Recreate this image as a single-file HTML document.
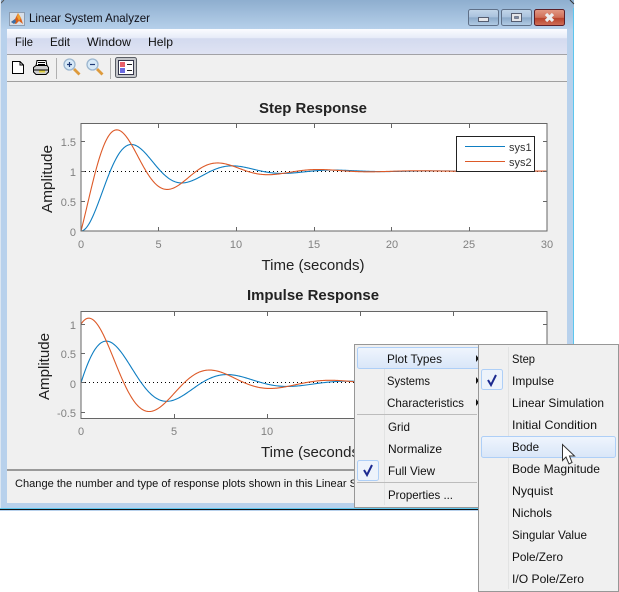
<!DOCTYPE html>
<html><head><meta charset="utf-8"><title>Linear System Analyzer</title>
<style>
html,body{margin:0;padding:0;background:#fff;width:619px;height:592px;overflow:hidden}
svg{display:block;font-family:"Liberation Sans",sans-serif}
.m{font-size:12px;fill:#111}
.t{font-size:11px;fill:#808080}
.e{text-anchor:end}.c{text-anchor:middle}
.l{font-size:15px;fill:#222}
.h{font-size:14.5px;font-weight:bold;fill:#222}
</style></head><body>
<svg xmlns="http://www.w3.org/2000/svg" width="619" height="592" viewBox="0 0 619 592">
<defs>
<linearGradient id="tg" x1="0" y1="0" x2="0" y2="1"><stop offset="0" stop-color="#8eaecf"/><stop offset="1" stop-color="#b6d0ea"/></linearGradient>
<linearGradient id="mg" x1="0" y1="0" x2="0" y2="1"><stop offset="0" stop-color="#fbfcff"/><stop offset=".36" stop-color="#e6ebf8"/><stop offset=".38" stop-color="#d3daef"/><stop offset="1" stop-color="#dfe3f3"/></linearGradient>
<linearGradient id="bg" x1="0" y1="0" x2="0" y2="1"><stop offset="0" stop-color="#c3d6ea"/><stop offset=".48" stop-color="#a9c2dd"/><stop offset=".5" stop-color="#8aa8c8"/><stop offset="1" stop-color="#b3cde6"/></linearGradient>
<linearGradient id="cg" x1="0" y1="0" x2="0" y2="1"><stop offset="0" stop-color="#e39a86"/><stop offset=".5" stop-color="#cf6f58"/><stop offset=".55" stop-color="#b8432c"/><stop offset="1" stop-color="#d0715a"/></linearGradient>
<linearGradient id="hg" x1="0" y1="0" x2="0" y2="1"><stop offset="0" stop-color="#eff5fd"/><stop offset="1" stop-color="#d9e6f8"/></linearGradient>
<clipPath id="c1"><rect x="81" y="124" width="466" height="107"/></clipPath>
<clipPath id="c2"><rect x="81" y="311" width="466" height="107"/></clipPath>
</defs>

<!-- window frame -->
<path d="M5 0H569Q574 0 574 5V511H0V5Q0 0 5 0Z" fill="#b8d1ec"/>
<rect x="0" y="0" width="574" height="29" fill="url(#tg)"/>
<path d="M0 4L4 0" stroke="#555" stroke-width="1"/>
<path d="M570 0L574 4" stroke="#333" stroke-width="1"/>
<rect x="573" y="8" width="1" height="502" fill="#5cc6ee"/>
<rect x="0" y="0" width="1" height="510" fill="#dbe6f2"/>
<rect x="0" y="509" width="574" height="1" fill="#111"/>
<rect x="0" y="508" width="574" height="1" fill="#5cc6ee"/>
<rect x="7" y="29" width="560" height="474" fill="#f0f0f0"/>

<!-- app icon -->
<rect x="9.5" y="12.5" width="15" height="13" fill="#d8dfe8" stroke="#8c9cb0"/>
<path d="M11 22L15 19L18 13L21 18L23 24L19 21L16 24Z" fill="#d9601c"/>
<path d="M11 22L15 19L16 22L14 24Z" fill="#3a6fa8"/>
<path d="M18 13L21 18L19 21L17 17Z" fill="#f0a030"/>
<text x="29" y="22" font-size="12" fill="#101018" textLength="121" lengthAdjust="spacingAndGlyphs">Linear System Analyzer</text>

<!-- window buttons -->
<rect x="468.5" y="9.5" width="30" height="16" rx="2" fill="url(#bg)" stroke="#5f7088"/>
<rect x="478.5" y="17.5" width="10" height="4" fill="#e4e6ea" stroke="#555d70" stroke-width="1"/>
<rect x="501.5" y="9.5" width="30" height="16" rx="2" fill="url(#bg)" stroke="#5f7088"/>
<rect x="511.5" y="13.5" width="10" height="8" fill="#e4e6ea" stroke="#555d70"/>
<rect x="514.5" y="16.5" width="4" height="2" fill="#7a8ba5" stroke="#555d70" stroke-width=".6"/>
<rect x="534.5" y="9.5" width="30" height="16" rx="2" fill="url(#cg)" stroke="#5c1f28"/>
<path d="M546 14L553 21M553 14L546 21" stroke="#eceef0" stroke-width="3.2"/>

<!-- menu bar -->
<rect x="7" y="29" width="560" height="25" fill="url(#mg)"/>
<rect x="7" y="54" width="560" height="1" fill="#a2a2a6"/>
<text class="m" x="15" y="46" textLength="18" lengthAdjust="spacingAndGlyphs">File</text>
<text class="m" x="50" y="46" textLength="20" lengthAdjust="spacingAndGlyphs">Edit</text>
<text class="m" x="87" y="46" textLength="44" lengthAdjust="spacingAndGlyphs">Window</text>
<text class="m" x="148" y="46" textLength="25" lengthAdjust="spacingAndGlyphs">Help</text>

<!-- toolbar -->
<rect x="7" y="81" width="560" height="1" fill="#a0a0a0"/>
<path d="M12.5 61.5H20L23.5 65V73.5H12.5Z" fill="#fff" stroke="#000"/>
<path d="M20 61.5V65H23.5" fill="none" stroke="#000"/>
<path d="M37 60.5H46L47 66H36Z" fill="#fff" stroke="#000"/>
<path d="M38 62.5H45M38 64.5H45" stroke="#000"/>
<path d="M33.5 67.5L36 65.5H47L48.5 67.5V72L46 74.5H36L33.5 72Z" fill="#cfcfcf" stroke="#000"/>
<path d="M34 70H48" stroke="#000"/>
<path d="M39 71.5H45" stroke="#e0d040" stroke-width="2"/>
<rect x="56" y="58" width="1" height="21" fill="#b0b0b0"/>
<circle cx="69.5" cy="64.5" r="5.5" fill="#d7e9f7" stroke="#9cb6cf" stroke-width="1.3"/>
<path d="M67 64.5H72M69.5 62V67" stroke="#1f3a77" stroke-width="1.2"/>
<path d="M74 69L79.5 74.5" stroke="#dd9a3c" stroke-width="2.8"/>
<circle cx="92.5" cy="64.5" r="5.5" fill="#d7e9f7" stroke="#9cb6cf" stroke-width="1.3"/>
<path d="M90 64.5H95" stroke="#1f3a77" stroke-width="1.2"/>
<path d="M97 69L102.5 74.5" stroke="#dd9a3c" stroke-width="2.8"/>
<rect x="110" y="58" width="1" height="21" fill="#b0b0b0"/>
<rect x="115.5" y="57.5" width="21" height="20" rx="2" fill="#c4c6ca" stroke="#5a5e66"/>
<rect x="118.5" y="60.5" width="15" height="14" fill="#fff" stroke="#33354a"/>
<rect x="120" y="62" width="5" height="5" fill="#e8606a"/>
<rect x="120" y="68" width="5" height="5" fill="#6a6ae0"/>
<path d="M127 64.5H132M127 70.5H132" stroke="#222"/>

<!-- step plot -->
<text class="h" x="313" y="113" text-anchor="middle" textLength="108" lengthAdjust="spacingAndGlyphs">Step Response</text>
<rect x="81" y="124" width="466" height="107" fill="#fff"/>
<path d="M81 171.5H547" stroke="#000" stroke-dasharray="1 3"/>
<g clip-path="url(#c1)">
<path id="s1" fill="none" stroke="#0f7ec2" stroke-width="1.1"/>
<path id="s2" fill="none" stroke="#dd5a28" stroke-width="1.1"/>
</g>
<g stroke="#666" fill="none">
<rect x="81" y="123.5" width="466" height="107.5"/>
<path d="M158.5 124v4M236.5 124v4M314.5 124v4M391.5 124v4M469.5 124v4M158.5 231v-4M236.5 231v-4M314.5 231v-4M391.5 231v-4M469.5 231v-4M81 141.5h4M81 171.5h4M81 201.5h4M547 141.5h-4M547 171.5h-4M547 201.5h-4"/>
</g>
<text class="t e" x="76" y="146">1.5</text>
<text class="t e" x="76" y="176">1</text>
<text class="t e" x="76" y="206">0.5</text>
<text class="t e" x="76" y="236">0</text>
<g text-anchor="middle" font-size="11" fill="#808080">
<text x="81" y="248">0</text><text x="158.5" y="248">5</text><text x="236" y="248">10</text><text x="314" y="248">15</text><text x="392" y="248">20</text><text x="469" y="248">25</text><text x="547" y="248">30</text>
</g>
<text class="l" x="313" y="270" text-anchor="middle" textLength="103" lengthAdjust="spacingAndGlyphs">Time (seconds)</text>
<text class="l" transform="translate(52,213) rotate(-90)" textLength="68" lengthAdjust="spacingAndGlyphs">Amplitude</text>
<!-- legend -->
<rect x="456.5" y="136.5" width="78" height="35" fill="#fff" stroke="#222"/>
<path d="M465 146.5H505" stroke="#0f7ec2" stroke-width="1.1"/>
<path d="M465 161.5H505" stroke="#dd5a28" stroke-width="1.1"/>
<text x="509" y="151" font-size="11" fill="#333">sys1</text>
<text x="509" y="166" font-size="11" fill="#333">sys2</text>

<!-- impulse plot -->
<text class="h" x="313" y="300" text-anchor="middle" textLength="132" lengthAdjust="spacingAndGlyphs">Impulse Response</text>
<rect x="81" y="311" width="466" height="107" fill="#fff"/>
<path d="M81 382.5H547" stroke="#000" stroke-dasharray="1 3"/>
<g clip-path="url(#c2)">
<path id="i1" fill="none" stroke="#0f7ec2" stroke-width="1.1"/>
<path id="i2" fill="none" stroke="#dd5a28" stroke-width="1.1"/>
</g>
<g stroke="#666" fill="none">
<rect x="81" y="311.5" width="466" height="107"/>
<path d="M174.5 312v4M267.5 312v4M360.5 312v4M453.5 312v4M174.5 418v-4M267.5 418v-4M81 324.5h4M81 353.5h4M81 382.5h4M81 412.5h4M547 324.5h-4"/>
</g>
<text class="t e" x="76" y="329">1</text>
<text class="t e" x="76" y="358">0.5</text>
<text class="t e" x="76" y="388">0</text>
<text class="t e" x="76" y="417">-0.5</text>
<g text-anchor="middle" font-size="11" fill="#808080">
<text x="81" y="435">0</text><text x="174" y="435">5</text><text x="267" y="435">10</text>
</g>
<text class="l" x="261" y="457" textLength="103" lengthAdjust="spacingAndGlyphs">Time (seconds)</text>
<text class="l" transform="translate(49,400) rotate(-90)" textLength="67" lengthAdjust="spacingAndGlyphs">Amplitude</text>

<!-- status -->
<rect x="7" y="469" width="560" height="2" fill="#9a9a9a"/>
<text x="15" y="487" font-size="11" fill="#111" textLength="342" lengthAdjust="spacingAndGlyphs">Change the number and type of response plots shown in this Linear S</text>

<!-- left menu -->
<rect x="354.5" y="344.5" width="125" height="163" fill="#f0f0f0" stroke="#979797"/>
<rect x="384" y="347" width="1" height="158" fill="#e2e3e3"/>
<rect x="357.5" y="347.5" width="122" height="21" rx="2" fill="url(#hg)" stroke="#aecff7"/>
<rect x="357" y="414" width="120" height="1" fill="#bcbcbc"/>
<rect x="357" y="482" width="120" height="1" fill="#bcbcbc"/>
<text class="m" x="387" y="363" textLength="55" lengthAdjust="spacingAndGlyphs">Plot Types</text>
<text class="m" x="387" y="385" textLength="43" lengthAdjust="spacingAndGlyphs">Systems</text>
<text class="m" x="387" y="407" textLength="77" lengthAdjust="spacingAndGlyphs">Characteristics</text>
<text class="m" x="388" y="431" textLength="22" lengthAdjust="spacingAndGlyphs">Grid</text>
<text class="m" x="388" y="453" textLength="54" lengthAdjust="spacingAndGlyphs">Normalize</text>
<text class="m" x="388" y="475" textLength="47" lengthAdjust="spacingAndGlyphs">Full View</text>
<text class="m" x="388" y="499" textLength="65" lengthAdjust="spacingAndGlyphs">Properties ...</text>
<path d="M476 355L479 358.5L476 362ZM476 377L479 380.5L476 384ZM476 399L479 402.5L476 406Z" fill="#111"/>
<rect x="357.5" y="460.5" width="21" height="20" rx="2" fill="#edf3fb" stroke="#aecff7"/>
<path d="M364 470L367 475L372 465" fill="none" stroke="#1c2a90" stroke-width="2"/>

<!-- right menu -->
<rect x="478.5" y="344.5" width="140" height="247" fill="#f0f0f0" stroke="#979797"/>
<rect x="508" y="347" width="1" height="242" fill="#e2e3e3"/>
<rect x="481.5" y="436.5" width="134" height="21" rx="2" fill="url(#hg)" stroke="#aecff7"/>
<rect x="481.5" y="369.5" width="21" height="20" rx="2" fill="#edf3fb" stroke="#aecff7"/>
<path d="M488 380L491 385L496 375" fill="none" stroke="#1c2a90" stroke-width="2"/>
<text class="m" x="512" y="363" textLength="23" lengthAdjust="spacingAndGlyphs">Step</text>
<text class="m" x="512" y="385" textLength="42" lengthAdjust="spacingAndGlyphs">Impulse</text>
<text class="m" x="512" y="407" textLength="92" lengthAdjust="spacingAndGlyphs">Linear Simulation</text>
<text class="m" x="512" y="429" textLength="85" lengthAdjust="spacingAndGlyphs">Initial Condition</text>
<text class="m" x="512" y="451" textLength="27" lengthAdjust="spacingAndGlyphs">Bode</text>
<text class="m" x="512" y="473" textLength="88" lengthAdjust="spacingAndGlyphs">Bode Magnitude</text>
<text class="m" x="512" y="495" textLength="41" lengthAdjust="spacingAndGlyphs">Nyquist</text>
<text class="m" x="512" y="517" textLength="40" lengthAdjust="spacingAndGlyphs">Nichols</text>
<text class="m" x="512" y="539" textLength="75" lengthAdjust="spacingAndGlyphs">Singular Value</text>
<text class="m" x="512" y="561" textLength="51" lengthAdjust="spacingAndGlyphs">Pole/Zero</text>
<text class="m" x="512" y="583" textLength="72" lengthAdjust="spacingAndGlyphs">I/O Pole/Zero</text>

<!-- cursor -->
<path d="M562.5 444.5V460.5L566 457L569 464L572 462.5L569.5 456H574.5Z" fill="#fff" stroke="#333"/>
</svg>
<script>
(function(){
var s=0.25,w=Math.sqrt(1-s*s);
function I(t){return Math.exp(-s*t)*Math.sin(w*t)/w;}
function S(t){return 1-Math.exp(-s*t)*(Math.cos(w*t)+s/w*Math.sin(w*t));}
function D(t){return Math.exp(-s*t)*(Math.cos(w*t)-s/w*Math.sin(w*t));}
function P(f,x0,kx,y0,ky,T){var d='';for(var t=0;t<=T;t+=0.05){d+=(d?'L':'M')+(x0+kx*t).toFixed(2)+' '+(y0-ky*f(t)).toFixed(2);}return d;}
function set(id,d){document.getElementById(id).setAttribute('d',d);}
set('s1',P(S,81,15.533,231,59.9,30));
set('s2',P(function(t){return S(t)+I(t);},81,15.533,231,59.9,30));
set('i1',P(I,81,18.6,382.8,58.6,25));
set('i2',P(function(t){return I(t)+D(t);},81,18.6,382.8,58.6,25));
})();
</script>
</body></html>
